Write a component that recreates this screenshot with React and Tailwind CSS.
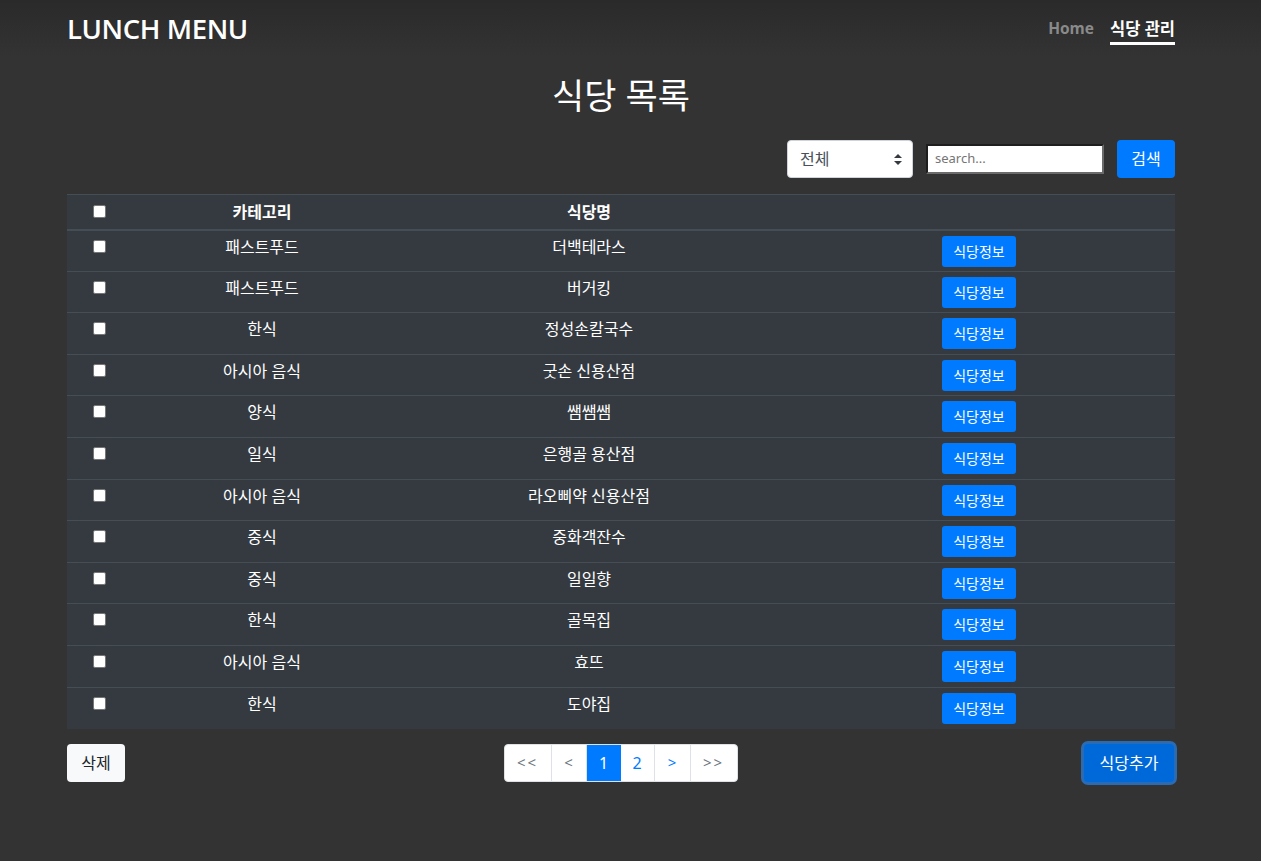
import React from 'react';

const rows = [
  ['패스트푸드', '더백테라스'],
  ['패스트푸드', '버거킹'],
  ['한식', '정성손칼국수'],
  ['아시아 음식', '굿손 신용산점'],
  ['양식', '쌤쌤쌤'],
  ['일식', '은행골 용산점'],
  ['아시아 음식', '라오삐약 신용산점'],
  ['중식', '중화객잔수'],
  ['중식', '일일향'],
  ['한식', '골목집'],
  ['아시아 음식', '효뜨'],
  ['한식', '도야집'],
];

const font = { fontFamily: '"Noto Sans", "Noto Sans CJK KR", sans-serif' };

const Check = ({ className = '' }) => (
  <span className={`block mx-auto w-[13px] h-[13px] bg-white border border-[#767676] rounded-[2px] ${className}`} />
);

export default function App() {
  return (
    <div className="min-h-[861px] bg-[#333333] text-white" style={font}>
      {/* Navbar */}
      <div className="bg-gradient-to-b from-[#2a2a2a] to-[#333333]">
        <div className="w-[1108px] ml-[67px] h-[56px] flex items-center justify-between">
          <h1
            className="text-[27.5px] font-semibold leading-none tracking-[-0.4px] mt-[1px]"
            style={{ fontFamily: '"Open Sans", sans-serif' }}
          >
            LUNCH MENU
          </h1>
          <nav className="flex items-start gap-4 font-bold h-[46px] pt-[12px]">
            <a className="text-[#8a8a8a] text-[15.5px] leading-[23px]" style={{ fontFamily: '"Open Sans", sans-serif' }}>Home</a>
            <a className="text-white text-[16.5px] border-b-[3px] border-white pb-[2px] leading-[23px]">식당 관리</a>
          </nav>
        </div>
      </div>

      <div className="w-[1108px] ml-[67px]">
        <h2 className="text-center text-[35px] leading-none mt-[22px]">식당 목록</h2>

        {/* Search */}
        <div className="flex justify-end items-center mt-[27px] gap-[13px]">
          <div className="w-[126px] h-[38px] bg-white rounded-[4px] border border-[#ced4da] flex items-center justify-between pl-[12px] pr-[10px] text-[#495057] text-[16px]">
            <span>전체</span>
            <svg width="8" height="11" viewBox="0 0 8 11">
              <path d="M4 0 L8 4 H0 Z M4 11 L0 7 H8 Z" fill="#343a40" />
            </svg>
          </div>
          <div className="w-[178px] h-[30px] bg-white border-2 border-t-[#1e1e1e] border-l-[#1e1e1e] border-r-[#6b6b6b] border-b-[#6b6b6b] flex items-center px-[7px] text-[13px] text-[#757575]">
            search...
          </div>
          <button className="w-[58px] h-[38px] bg-[#007bff] rounded-[4px] text-white text-[16px]">검색</button>
        </div>

        {/* Table */}
        <table className="w-full mt-[16px] bg-[#343a40] border-collapse table-fixed text-[16px]">
          <colgroup>
            <col className="w-[64px]" />
            <col className="w-[262px]" />
            <col className="w-[392px]" />
            <col />
          </colgroup>
          <thead>
            <tr className="h-[35px] border-t border-[#454d55] border-b-2">
              <th className="text-center font-bold"><Check /></th>
              <th className="text-center font-bold">카테고리</th>
              <th className="text-center font-bold">식당명</th>
              <th></th>
            </tr>
          </thead>
          <tbody>
            {rows.map(([cat, name], i) => (
              <tr key={i} className={`h-[41.6px] ${i > 0 ? 'border-t border-[#454d55]' : ''}`}>
                <td className="align-top pt-[9px]"><Check /></td>
                <td className="text-center align-top pt-[5px] leading-[22px]">{cat}</td>
                <td className="text-center align-top pt-[5px] leading-[22px]">{name}</td>
                <td className="text-center align-top pt-[5px]">
                  <button className="w-[74px] h-[31px] bg-[#007bff] rounded-[3px] text-[14px] text-white -ml-[2px]">식당정보</button>
                </td>
              </tr>
            ))}
          </tbody>
        </table>

        {/* Bottom */}
        <div className="flex items-center mt-[15px]">
          <div className="flex-1 flex">
            <button className="w-[58px] h-[38px] bg-[#f8f9fa] rounded-[4px] text-[#212529] text-[16px]">삭제</button>
          </div>
          <div className="flex h-[38px] bg-white rounded-[4px] border border-[#dee2e6] overflow-hidden text-[15px] -ml-[1px]">
            <span className="w-[47px] flex items-center justify-center text-[#6c757d] border-r border-[#dee2e6] tracking-[2px]">&lt;&lt;</span>
            <span className="w-[35px] flex items-center justify-center text-[#6c757d] border-r border-[#dee2e6]">&lt;</span>
            <span className="w-[34px] flex items-center justify-center bg-[#007bff] text-white text-[16px]">1</span>
            <span className="w-[34px] flex items-center justify-center text-[#007bff] border-r border-[#dee2e6] text-[16px]">2</span>
            <span className="w-[36px] flex items-center justify-center text-[#007bff] border-r border-[#dee2e6]">&gt;</span>
            <span className="w-[46px] flex items-center justify-center text-[#6c757d] tracking-[2px]">&gt;&gt;</span>
          </div>
          <div className="flex-1 flex justify-end">
            <button className="w-[90px] h-[38px] bg-[#0069d9] rounded-[4px] text-white text-[16px] ring-[3px] ring-[#2b6bb3] mr-[1px]">식당추가</button>
          </div>
        </div>
      </div>
    </div>
  );
}
